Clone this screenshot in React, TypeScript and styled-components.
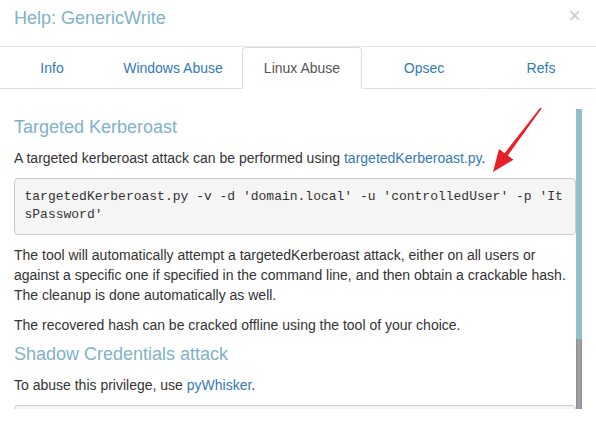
import React from "react";
import styled, { createGlobalStyle } from "styled-components";

const Global = createGlobalStyle`
  html, body { margin: 0; padding: 0; background: #fff; }
  body { font-family: "Liberation Sans", Arial, Helvetica, sans-serif; font-size: 14px; line-height: 20px; color: #333; }
  * { box-sizing: border-box; }
`;

const Modal = styled.div`
  position: relative;
  width: 596px;
  height: 424px;
  overflow: hidden;
  background: #fff;
`;

const Header = styled.div`
  display: flex;
  align-items: flex-start;
  justify-content: space-between;
  height: 47px;
  padding: 6px 14px 0 14px;
  border-bottom: 1px solid #e5e5e5;
`;

const Title = styled.h4`
  margin: 0;
  font-size: 18px;
  font-weight: 400;
  line-height: 25px;
  color: #80b2c9;
`;

const Close = styled.button`
  border: 0;
  background: transparent;
  padding: 0;
  margin: -1px 1px 0 0;
  font-family: "Liberation Sans", Arial, sans-serif;
  font-size: 22px;
  font-weight: 400;
  line-height: 1;
  color: #000;
  opacity: 0.2;
  cursor: pointer;
`;

const Tabs = styled.ul`
  display: grid;
  grid-template-columns: 104px 138px 120px 124px 1fr;
  list-style: none;
  margin: 0;
  padding: 0;
`;

const TabLink = styled.a<{ $active?: boolean }>`
  display: block;
  text-align: center;
  padding: 10px 15px;
  line-height: 20px;
  text-decoration: none;
  border: 1px solid ${(p) => (p.$active ? "#ddd" : "transparent")};
  border-bottom-color: ${(p) => (p.$active ? "#fff" : "#ddd")};
  border-radius: 4px 4px 0 0;
  color: ${(p) => (p.$active ? "#555" : "#337ab7")};
  background: #fff;
`;

const Body = styled.div`
  padding: 19px 14px 0 14px;
`;

const ScrollBox = styled.div`
  display: flex;
  height: 301px;
  overflow: hidden;
`;

const Content = styled.div`
  flex: 1;
  min-width: 0;
  overflow: hidden;
`;

const Scrollbar = styled.div`
  width: 6px;
  display: flex;
  flex-direction: column;
  margin-top: 1px;
`;

const Thumb = styled.div`
  height: 230px;
  background: #92c0c4;
`;

const Track = styled.div`
  flex: 1;
  background: linear-gradient(to right, #8a8e92, #a3a7aa 50%, #8a8e92);
`;

const Heading = styled.h4`
  margin: 10px 0 10px;
  font-size: 18px;
  font-weight: 400;
  line-height: 1.1;
  color: #80b2c9;
`;

const P = styled.p`
  margin: 0 0 10px;
`;

const Link = styled.a`
  color: #337ab7;
  text-decoration: none;
`;

const Pre = styled.pre`
  margin: 0 0 10px;
  padding: 9.5px;
  font-family: "Liberation Mono", "Courier New", monospace;
  font-size: 13px;
  line-height: 18px;
  color: #333;
  background: #f5f5f5;
  border: 1px solid #ccc;
  border-radius: 4px;
  white-space: pre-wrap;
  word-break: break-all;
`;

const Arrow = styled.svg`
  position: absolute;
  left: 0;
  top: 0;
  pointer-events: none;
`;

const tabs = ["Info", "Windows Abuse", "Linux Abuse", "Opsec", "Refs"];

export default function App() {
  return (
    <Modal>
      <Global />
      <Header>
        <Title>Help: GenericWrite</Title>
        <Close aria-label="Close">×</Close>
      </Header>
      <Tabs>
        {tabs.map((t) => (
          <li key={t}>
            <TabLink $active={t === "Linux Abuse"}>{t}</TabLink>
          </li>
        ))}
      </Tabs>
      <Body>
        <ScrollBox>
          <Content>
            <Heading>Targeted Kerberoast</Heading>
            <P>
              A targeted kerberoast attack can be performed using{" "}
              <Link>targetedKerberoast.py</Link>.
            </P>
            <Pre>
              targetedKerberoast.py -v -d 'domain.local' -u 'controlledUser' -p 'ItsPassword'
            </Pre>
            <P>
              The tool will automatically attempt a targetedKerberoast attack, either on all users or
              against a specific one if specified in the command line, and then obtain a crackable hash.
              The cleanup is done automatically as well.
            </P>
            <P>The recovered hash can be cracked offline using the tool of your choice.</P>
            <Heading>Shadow Credentials attack</Heading>
            <P>
              To abuse this privilege, use <Link>pyWhisker</Link>.
            </P>
            <Pre>
              pywhisker.py -d "domain.local" -u "controlledAccount" -p "somepassword" --target "targetAccount" --action "add"
            </Pre>
          </Content>
          <Scrollbar>
            <Thumb />
            <Track />
          </Scrollbar>
        </ScrollBox>
      </Body>
      <Arrow width="596" height="424" viewBox="0 0 596 424">
        <polygon
          points="493,172 499,149 504.6,153.2 540.4,107.6 541.6,108.4 507.8,155.6 513.4,159.8"
          fill="#e8202a"
        />
      </Arrow>
    </Modal>
  );
}
